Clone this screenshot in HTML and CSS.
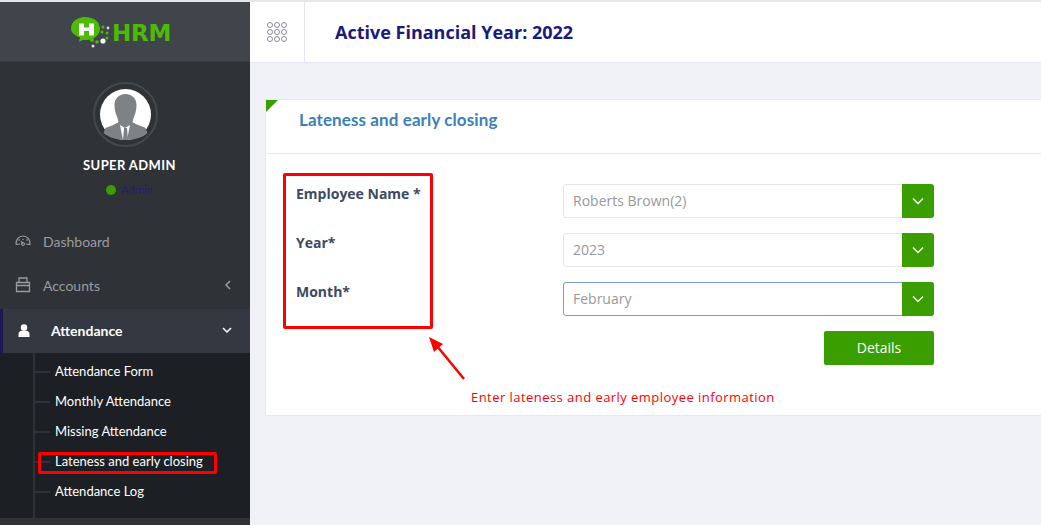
FILE: index.html
```html
<!DOCTYPE html>
<html lang="en">
  <head>
    <meta charset="UTF-8" />
    <meta name="viewport" content="width=device-width, initial-scale=1.0" />
    <title>Lateness and early closing</title>
    <link rel="stylesheet" href="styles.css">
  </head>
  <body>
    <div class="page">
      <aside class="sidebar">
        <div class="logo">
          <svg class="logo-mark" width="41" height="32" viewBox="0 0 41 32">
            <path d="M14 0c9 0 15 5 15 11.500S23 23 15 23c-1 0-2 0-3-.3L8 25l1-4.500C3.500 18.500 0 15.500 0 11.500 0 5 6 0 14 0z" fill="#4dbb06" />
            <rect x="8" y="6.500" width="5" height="12" fill="#fff" />
            <rect x="18" y="6.500" width="5" height="12" fill="#fff" />
            <rect x="12" y="10.500" width="7" height="3.500" fill="#fff" />
            <circle cx="32" cy="10" r="1.500" fill="#4dbb06" />
            <circle cx="37" cy="11" r="1.400" fill="#ddd" />
            <circle cx="31" cy="15" r="1.500" fill="#4dbb06" />
            <circle cx="36" cy="16" r="1.500" fill="#4dbb06" />
            <circle cx="32" cy="24" r="2.600" fill="#fff" />
            <circle cx="26" cy="25" r="1.800" fill="#4dbb06" />
            <circle cx="36" cy="21" r="1.500" fill="#4dbb06" />
            <circle cx="21" cy="23" r="2" fill="#4dbb06" />
            <circle cx="22" cy="29" r="1.500" fill="#ddd" />
          </svg>
          <span class="logo-text">HRM</span>
        </div>
        <div class="profile">
          <div class="avatar-ring">
            <svg class="avatar" width="51" height="51" viewBox="0 0 51 51">
              <circle cx="25.500" cy="25.500" r="25.500" fill="#fff" />
              <path d="M25.500 5c6 0 11 4 11 11 0 4-1 9-3 13l-1 4c4 3 10 4 13 6l2 5c-4 4-12 7-22 7s-17-3-22-7l2-5c4-2 9-3 13-6l-1-4c-2-4-3-9-3-13 0-7 5-11 11-11z" fill="#7f8285" />
              <path d="M20 36l5 3 5-3-3 15h-4z" fill="#fff" />
              <path d="M24 39h3l1 12h-5z" fill="#7f8285" />
            </svg>
          </div>
          <div class="profile-name">SUPER ADMIN</div>
          <div class="profile-role"><span class="dot"></span>Admin</div>
        </div>
        <nav class="menu">
          <a class="menu-item">
            <svg class="menu-icon" width="16" height="12" viewBox="0 0 16 12">
              <path d="M1 9.500C.5 4.500 4 1 8 1s7.500 3.500 7 8.500l-4-.5M1 9.500l4-.5M8 4v1M3.500 4.500l1 1M12.500 4.500l-1 1M8 9l-2-3" fill="none" stroke="#9a9da0" stroke-width="1.200" />
              <circle cx="8" cy="9" r="1.500" fill="none" stroke="#9a9da0" />
            </svg>
            <span>Dashboard</span>
          </a>
          <a class="menu-item">
            <svg class="menu-icon" width="16" height="16" viewBox="0 0 16 16">
              <path d="M1.500 5.500h13v9h-13zM1.500 8.500h13M4 5.500V1h8v4.500" fill="none" stroke="#9a9da0" stroke-width="1.300" />
            </svg>
            <span>Accounts</span>
            <svg class="menu-caret" width="8" height="10" viewBox="0 0 8 10">
              <path d="M6 1L2 5l4 4" fill="none" stroke="#9a9da0" stroke-width="1.500" />
            </svg>
          </a>
          <a class="menu-item active">
            <svg class="menu-icon" width="12" height="13" viewBox="0 0 12 13">
              <circle cx="6" cy="3.500" r="3.200" fill="#fff" />
              <path d="M0.500 13V10C.5 8 2 7 4 6.500h4C10 7 11.500 8 11.500 10v3z" fill="#fff" />
            </svg>
            <span>Attendance</span>
            <svg class="menu-caret" width="10" height="8" viewBox="0 0 10 8">
              <path d="M1 2l4 4 4-4" fill="none" stroke="#fff" stroke-width="1.500" />
            </svg>
          </a>
          <ul class="submenu">
            <li>Attendance Form</li>
            <li>Monthly Attendance</li>
            <li>Missing Attendance</li>
            <li>Lateness and early closing</li>
            <li>Attendance Log</li>
          </ul>
        </nav>
        <div class="mark mark-menu"></div>
      </aside>

      <main class="content">
        <header class="topbar">
          <div class="apps">
            <div class="apps-grid">
              <i></i><i></i><i></i><i></i><i></i><i></i><i></i><i></i><i></i>
            </div>
          </div>
          <h1>Active Financial Year: 2022</h1>
        </header>

        <section class="card">
          <div class="card-head">
            <h2>Lateness and early closing</h2>
          </div>
          <form class="card-body" onsubmit="return false">
            <div class="labels">
              <label>Employee Name *</label>
              <label>Year*</label>
              <label>Month*</label>
            </div>
            <div class="fields">
              <div class="select">
                <span>Roberts Brown(2)</span>
                <b><svg width="12" height="8" viewBox="0 0 12 8"><path d="M1 1.500l5 5 5-5" fill="none" stroke="#fff" stroke-width="1.400" /></svg></b>
              </div>
              <div class="select">
                <span>2023</span>
                <b><svg width="12" height="8" viewBox="0 0 12 8"><path d="M1 1.500l5 5 5-5" fill="none" stroke="#fff" stroke-width="1.400" /></svg></b>
              </div>
              <div class="select focus">
                <span>February</span>
                <b><svg width="12" height="8" viewBox="0 0 12 8"><path d="M1 1.500l5 5 5-5" fill="none" stroke="#fff" stroke-width="1.400" /></svg></b>
              </div>
              <button class="details" type="submit">Details</button>
            </div>
          </form>
          <div class="mark mark-labels"></div>
          <svg class="arrow" width="40" height="48" viewBox="0 0 40 48">
            <path d="M36 43L9 10" stroke="#f00" stroke-width="2.500" fill="none" />
            <path d="M1 1l14 7-9 8z" fill="#f00" />
          </svg>
          <p class="note">Enter lateness and early employee information</p>
        </section>
      </main>
    </div>
  </body>
</html>
```

FILE: styles.css
```css
* {
  box-sizing: border-box;
}

html,
body {
  height: 100%;
  margin: 0;
  overflow: hidden;
}

body {
  font-family: "Open Sans", sans-serif;
  background-color: #f1f2f7;
}

.page {
  display: flex;
  height: 525px;
  border-top: 2px solid #e4e6e8;
}

.sidebar {
  position: relative;
  flex: 0 0 250px;
  background-color: #2f3236;
  font-family: Lato, sans-serif;
}

.logo {
  display: flex;
  align-items: center;
  height: 60px;
  padding: 2px 0 0 71px;
  background-color: #40454c;
  border-bottom: 1px solid #363a40;
}

.logo-text {
  font-family: "DejaVu Sans", sans-serif;
  font-size: 23px;
  font-weight: bold;
  letter-spacing: -0.2px;
  color: #4dbb06;
}

.profile {
  display: flex;
  flex-direction: column;
  align-items: center;
  padding-top: 20px;
}

.avatar-ring {
  display: flex;
  align-items: center;
  justify-content: center;
  width: 65px;
  height: 65px;
  border: 2px solid #45484c;
  border-radius: 50%;
}

.avatar {
  display: block;
}

.profile-name {
  margin: 9px 0 0 9px;
  font-size: 13px;
  font-weight: bold;
  letter-spacing: 0.4px;
  line-height: 18px;
  color: #fff;
}

.profile-role {
  display: flex;
  align-items: center;
  margin: 8px 0 0 9px;
  font-size: 11px;
  line-height: 16px;
  color: #1f1f7a;
}

.dot {
  width: 10px;
  height: 10px;
  margin-right: 5px;
  border-radius: 50%;
  background-color: #3a9d00;
}

.menu {
  margin-top: 21px;
}

.menu-item {
  display: flex;
  align-items: center;
  height: 44px;
  padding: 0 18px 0 15px;
  font-size: 14px;
  color: #9a9da0;
}

.menu-icon {
  flex: 0 0 auto;
  margin-right: 12px;
}

.menu-caret {
  margin-left: auto;
}

.menu-item.active {
  margin-top: 2px;
  padding: 0 18px 2px 15px;
  background-color: #343841;
  border-left: 3px solid #1a1a4e;
  font-weight: bold;
  color: #fff;
}

.menu-item.active .menu-icon {
  margin-right: 21px;
}

.submenu {
  position: relative;
  margin: 0;
  padding: 3px 0 0;
  height: 165px;
  list-style: none;
  background-color: #1c1f23;
}

.submenu::before {
  content: "";
  position: absolute;
  left: 33px;
  top: 0;
  bottom: 0;
  width: 2px;
  background-color: #2f3236;
}

.submenu li {
  position: relative;
  height: 30px;
  padding-left: 55px;
  font-size: 13px;
  line-height: 30px;
  color: #fff;
}

.submenu li::before {
  content: "";
  position: absolute;
  left: 35px;
  top: 15px;
  width: 15px;
  height: 2px;
  background-color: #2f3236;
}

.content {
  flex: 1;
  min-width: 0;
}

.topbar {
  display: flex;
  align-items: center;
  height: 61px;
  background-color: #fff;
  border-bottom: 1px solid #e3e6ee;
}

.apps {
  display: flex;
  align-items: center;
  justify-content: center;
  width: 55px;
  height: 100%;
  border-right: 1px solid #e3e6ee;
}

.apps-grid {
  display: grid;
  grid-template-columns: repeat(3, 6px);
  gap: 1px;
}

.apps-grid i {
  width: 6px;
  height: 6px;
  border: 1px solid #8a8a9a;
  border-radius: 50%;
}

.topbar h1 {
  margin: 0 0 0 30px;
  font-size: 18px;
  font-weight: bold;
  color: #1a1a7a;
}

.card {
  position: relative;
  height: 317px;
  margin: 36px 0 0 15px;
  background-color: #fff;
  border: 1px solid #e8eaf0;
  border-right: 0;
}

.card::before {
  content: "";
  position: absolute;
  left: 0;
  top: 0;
  border-top: 12px solid #3a9d00;
  border-right: 12px solid transparent;
}

.card-head {
  height: 54px;
  padding: 10px 0 0 33px;
  border-bottom: 1px solid #e9ebee;
}

.card-head h2 {
  margin: 0;
  font-family: Lato, sans-serif;
  font-size: 17px;
  font-weight: bold;
  letter-spacing: 0.1px;
  line-height: 20px;
  color: #3d7fb8;
}

.card-body {
  display: flex;
  padding-top: 30px;
}

.labels {
  display: flex;
  flex-direction: column;
  gap: 29px;
  width: 297px;
  padding-left: 30px;
}

.labels label {
  font-size: 14px;
  font-weight: bold;
  line-height: 20px;
  color: #3c4a63;
}

.fields {
  display: flex;
  flex-direction: column;
  align-items: flex-end;
  gap: 15px;
  width: 371px;
}

.select {
  display: flex;
  align-items: stretch;
  width: 100%;
  height: 34px;
  background-color: #fff;
  border: 1px solid #e5e5e5;
  border-radius: 3px;
  font-size: 14px;
  color: #999;
}

.select span {
  flex: 1;
  padding-left: 9px;
  line-height: 32px;
}

.select b {
  display: flex;
  align-items: center;
  justify-content: center;
  width: 32px;
  margin: -1px -1px -1px 0;
  background-color: #3a9d00;
  border-radius: 0 3px 3px 0;
}

.select.focus {
  border-color: #7a9ad0;
}

.details {
  width: 110px;
  height: 34px;
  padding-bottom: 3px;
  border: 0;
  border-radius: 2px;
  background-color: #3a9d00;
  font-family: "Open Sans", sans-serif;
  font-size: 14px;
  color: #fff;
}

.mark {
  position: absolute;
  border: 3px solid #f00;
  border-radius: 2px;
}

.mark-menu {
  left: 38px;
  top: 450px;
  width: 179px;
  height: 22px;
}

.mark-labels {
  left: 17px;
  top: 73px;
  width: 150px;
  height: 156px;
}

.arrow {
  position: absolute;
  left: 162px;
  top: 236px;
}

.note {
  position: absolute;
  left: 205px;
  top: 288px;
  margin: 0;
  font-size: 13px;
  letter-spacing: 0.45px;
  line-height: 18px;
  color: #f00;
}
```
